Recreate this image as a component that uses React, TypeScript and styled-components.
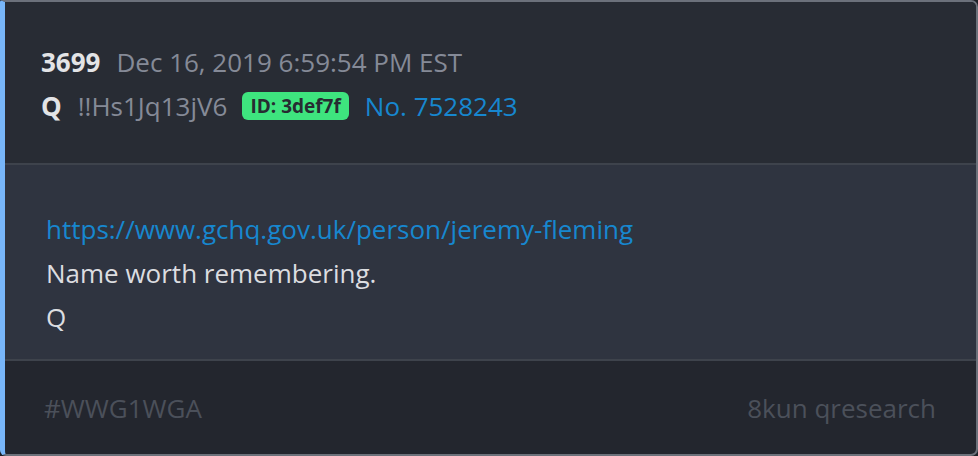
import React from 'react';
import styled, { createGlobalStyle } from 'styled-components';

const GlobalStyle = createGlobalStyle`
  html, body {
    margin: 0;
    padding: 0;
    background: #1e2127;
  }
  body {
    font-family: "Open Sans", "Noto Sans", sans-serif;
  }
`;

const Card = styled.article`
  box-sizing: border-box;
  width: 978px;
  height: 456px;
  display: flex;
  flex-direction: column;
  border: 2px solid #6c717b;
  border-left: 5px solid #78b6f9;
  border-radius: 2px 7px 7px 6px;
  overflow: hidden;
  background: #23262e;
`;

const Header = styled.header`
  background: #282c34;
  padding: 38px 40px 35px 36px;
  border-bottom: 2px solid #3e434c;
  display: flex;
  flex-direction: column;
`;

const MetaRow = styled.div`
  display: flex;
  align-items: center;
  gap: 16px;
  height: 44px;
  font-size: 26px;
`;

const Num = styled.span`
  font-weight: 700;
  color: #e3e4e6;
`;

const Muted = styled.span`
  color: #858a97;
`;

const Badge = styled.span`
  background: #3ee47e;
  color: #272b31;
  font-weight: 700;
  font-size: 19px;
  height: 28px;
  line-height: 28px;
  padding: 0 8px;
  margin-left: -1px;
  border-radius: 6px;
`;

const PostLink = styled.a`
  color: #1787cf;
  text-decoration: none;
`;

const Body = styled.section`
  flex: 1;
  background: #2f3440;
  padding: 42px 40px 20px 41px;
  border-bottom: 2px solid #3e434c;
  font-size: 26px;
  line-height: 44px;
  color: #dcdde0;
`;

const Line = styled.div``;

const Footer = styled.footer`
  display: flex;
  justify-content: space-between;
  align-items: center;
  padding: 0 40px 0 39px;
  height: 93px;
  font-size: 26px;
  color: #4b505a;
`;

export default function App() {
  return (
    <>
      <GlobalStyle />
      <Card>
        <Header>
          <MetaRow>
            <Num>3699</Num>
            <Muted>Dec 16, 2019 6:59:54 PM EST</Muted>
          </MetaRow>
          <MetaRow>
            <Num>Q</Num>
            <Muted>!!Hs1Jq13jV6</Muted>
            <Badge>ID: 3def7f</Badge>
            <PostLink href="#">No. 7528243</PostLink>
          </MetaRow>
        </Header>
        <Body>
          <Line>
            <PostLink href="#">https://www.gchq.gov.uk/person/jeremy-fleming</PostLink>
          </Line>
          <Line>Name worth remembering.</Line>
          <Line>Q</Line>
        </Body>
        <Footer>
          <span>#WWG1WGA</span>
          <span>8kun qresearch</span>
        </Footer>
      </Card>
    </>
  );
}
